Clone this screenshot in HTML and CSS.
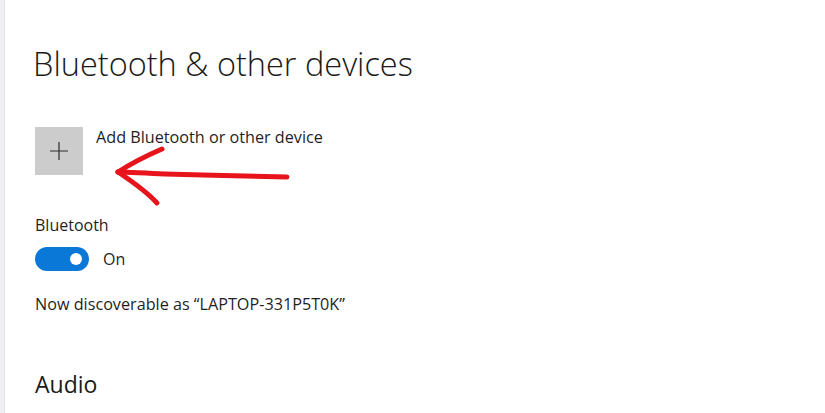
FILE: index.html
```html
<!DOCTYPE html>
<html lang="en">
<head>
<meta charset="utf-8">
<title>Bluetooth &amp; other devices</title>
<link rel="stylesheet" href="styles.css">
</head>
<body>
<div class="app">
  <div class="rail"></div>
  <main class="content">
    <h1 class="title">Bluetooth &amp; other devices</h1>
    <div class="add-row">
      <div class="add-tile">
        <svg width="20" height="20" viewBox="0 0 20 20"><path d="M10 1V19M1 10H19" stroke="#2b2b2b" stroke-width="1.2" fill="none"/></svg>
      </div>
      <div class="add-label">Add Bluetooth or other device</div>
    </div>
    <div class="field-label">Bluetooth</div>
    <div class="toggle-row">
      <div class="toggle"><span class="knob"></span></div>
      <span class="toggle-state">On</span>
    </div>
    <p class="discover">Now discoverable as “LAPTOP-331P5T0K”</p>
    <h2 class="section">Audio</h2>
  </main>
</div>
<svg class="annotation" width="825" height="413" viewBox="0 0 825 413">
  <g fill="none" stroke="#e8141c" stroke-width="5" stroke-linecap="round" stroke-linejoin="round">
    <path d="M287 177 C250 176 205 175 165 174 C140 173 126 172 118 172"/>
    <path d="M118 172 C132 163 148 155 162 149"/>
    <path d="M118 172 C133 182 147 192 157 203"/>
  </g>
</svg>
</body>
</html>
```
FILE: styles.css
```css
html, body {
  margin: 0;
  padding: 0;
  background: #ffffff;
}
body {
  font-family: "Open Sans", "Noto Sans", sans-serif;
  color: #1b1b1b;
  width: 825px;
  height: 413px;
  overflow: hidden;
  position: relative;
}
.app {
  display: flex;
  height: 413px;
}
.rail {
  width: 4px;
  background: #f0f0f2;
  border-right: 1px solid #e4e4e6;
  flex: none;
}
.content {
  padding-left: 30px;
  padding-top: 44px;
  flex: 1;
}
.title {
  margin: 0 0 0 -2px;
  font-size: 32.5px;
  font-weight: 300;
  line-height: 40px;
  color: #1a1a1a;
}
.add-row {
  display: flex;
  align-items: flex-start;
  margin-top: 43px;
}
.add-tile {
  width: 48px;
  height: 48px;
  background: #cccccc;
  display: flex;
  align-items: center;
  justify-content: center;
  flex: none;
}
.add-label {
  margin-left: 13px;
  font-size: 16.2px;
  line-height: 20px;
  color: #1f1f1f;
}
.field-label {
  margin-top: 40px;
  font-size: 16px;
  line-height: 20px;
  color: #1f1f1f;
}
.toggle-row {
  display: flex;
  align-items: center;
  margin-top: 12px;
}
.toggle {
  width: 54px;
  height: 24px;
  border-radius: 12px;
  background: #0a78d7;
  position: relative;
  flex: none;
}
.knob {
  position: absolute;
  width: 12px;
  height: 12px;
  border-radius: 50%;
  background: #ffffff;
  right: 7px;
  top: 6px;
}
.toggle-state {
  margin-left: 14px;
  font-size: 16px;
  line-height: 20px;
  color: #1f1f1f;
}
.discover {
  margin: 23px 0 0;
  font-size: 16.2px;
  line-height: 20px;
  color: #1f1f1f;
}
.section {
  margin: 55px 0 0;
  font-size: 23px;
  font-weight: 400;
  line-height: 30px;
  color: #1a1a1a;
}
.annotation {
  position: absolute;
  left: 0;
  top: 0;
  pointer-events: none;
}
```
